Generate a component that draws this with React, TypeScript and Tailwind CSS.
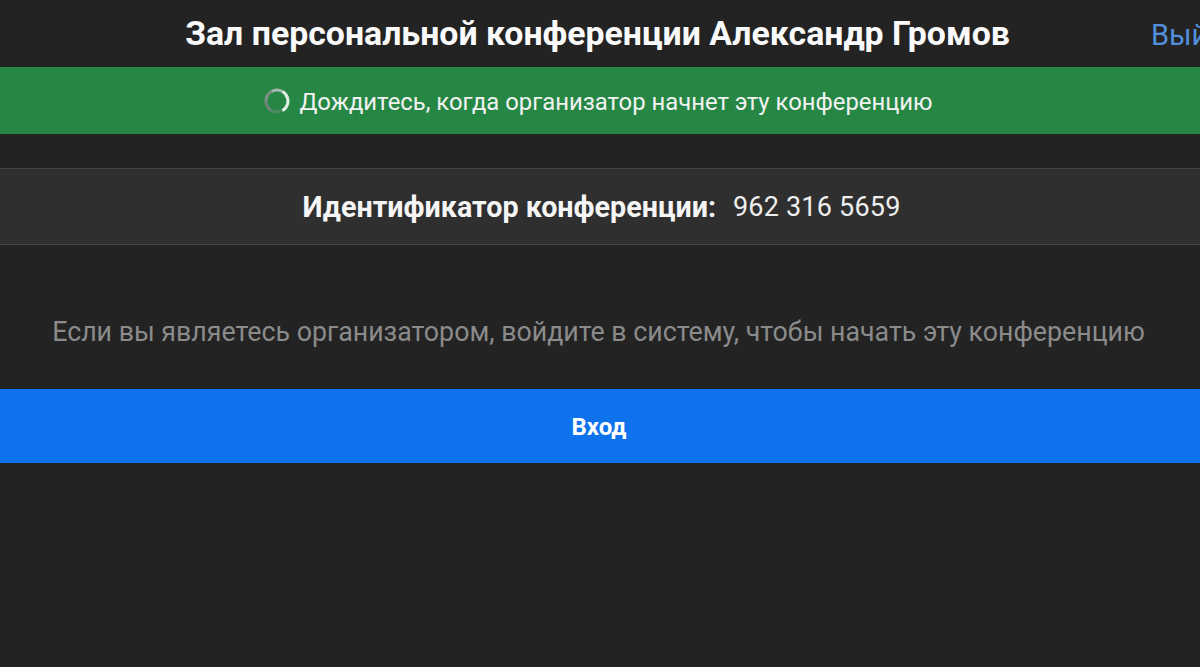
export default function App() {
  return (
    <div className="h-[667px] w-[1200px] overflow-hidden bg-[#232323] font-['Roboto',sans-serif] text-white">
      <header className="relative flex h-[67px] items-center justify-center">
        <h1 className="ml-[-5px] text-[33.85px] font-bold leading-none text-[#fafafa]">Зал персональной конференции Александр Громов</h1>
        <span className="absolute left-[1151px] top-[18px] text-[29px] leading-[34px] text-[#5290dc]">Выйти</span>
      </header>
      <div className="flex h-[67px] items-center justify-center gap-[8px] bg-[#268745] pr-[4px]">
        <svg width="28" height="28" viewBox="0 0 28 28" fill="none">
          <path d="M19.5 23.5a11 11 0 0 1-11 0" stroke="#4f8a63" strokeWidth="3" />
          <path d="M8.5 23.5a11 11 0 0 1-5.5-9.5" stroke="#6f8578" strokeWidth="3" />
          <path d="M3 14a11 11 0 0 1 5.5-9.5" stroke="#7f8f85" strokeWidth="3" />
          <path d="M8.5 4.500a11 11 0 0 1 11 0" stroke="#a9b8ae" strokeWidth="3" />
          <path d="M19.500 4.500a11 11 0 0 1 3.500 15.800" stroke="#e4ece6" strokeWidth="3" />
          <path d="M23 20.300a11 11 0 0 1-3.500 3.200" stroke="#f4f7f5" strokeWidth="3" />
        </svg>
        <span className="mt-[5px] text-[23.85px] leading-none text-[#f2f2f2]">Дождитесь, когда организатор начнет эту конференцию</span>
      </div>
      <div className="mt-[34px] flex h-[77px] items-center justify-center border-y border-[#444444] bg-[#2f2f2f] pl-[3px] pt-[2px]">
        <span className="text-[28.7px] font-bold text-[#f5f5f5]">Идентификатор конференции:</span>
        <span className="ml-[17px] text-[27px] tracking-[0.2px] text-[#eeeeee]">962 316 5659</span>
      </div>
      <p className="mt-[69px] pr-[3px] text-center text-[26.75px] leading-[36px] text-[#8b8b8b]">
        Если вы являетесь организатором, войдите в систему, чтобы начать эту конференцию
      </p>
      <button className="mt-[39px] flex h-[74px] w-full items-center justify-center bg-[#0e72ed] pr-[2px] pt-[2px] text-[24px] font-bold">Вход</button>
    </div>
  );
}
